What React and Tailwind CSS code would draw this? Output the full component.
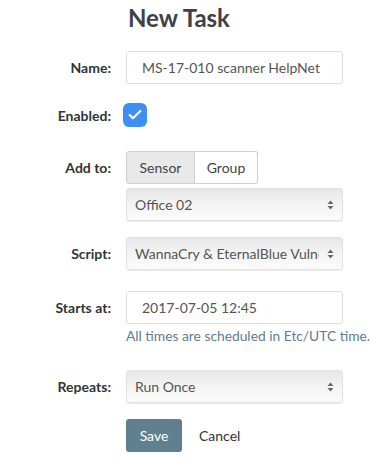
import { Check } from 'lucide-react';

const font = { fontFamily: 'Lato, "Open Sans", sans-serif' };

const Arrows = () => (
  <svg width="7" height="12" viewBox="0 0 7 12" className="shrink-0">
    <path d="M3.5 1.5 L6.5 5 L0.5 5 Z" fill="#666" />
    <path d="M3.5 10.5 L6.5 7 L0.5 7 Z" fill="#666" />
  </svg>
);

const Select = ({ value }) => (
  <div className="w-[217px] h-[33px] flex items-center justify-between pl-[8px] pr-[8px] rounded-[3px] border border-[#e2e2e2] bg-linear-to-b from-[#e6e6e6] via-[#f4f4f4] to-[#fbfbfb] shadow-[0_1px_1px_rgba(0,0,0,0.08)]">
    <span className="text-[14px] text-[#555] whitespace-nowrap overflow-hidden mr-2">{value}</span>
    <Arrows />
  </div>
);

const Row = ({ label, children, className = '' }) => (
  <div className={`flex items-center ${className}`}>
    <div className="w-[111px] text-right text-[14px] font-bold text-[#2f3438] shrink-0">{label}</div>
    <div className="ml-[15px]">{children}</div>
  </div>
);

const App = () => (
  <div className="w-[390px] h-[472px] bg-white text-[#333]" style={font}>
    <h1 className="pl-[128px] pt-[4px] text-[24px] font-bold text-[#3c4247] leading-[28px]">New Task</h1>

    <Row label="Name:" className="mt-[19px]">
      <div className="w-[217px] h-[33px] flex items-center px-[15px] border border-[#dedede] rounded-[3px] text-[14px] text-[#555]">
        MS-17-010 scanner HelpNet
      </div>
    </Row>

    <Row label="Enabled:" className="mt-[19px]">
      <div className="-ml-[3px] w-[24px] h-[24px] rounded-[6px] bg-[#3d8ef5] flex items-center justify-center">
        <Check className="w-[16px] h-[16px] text-white" strokeWidth={3.2} />
      </div>
    </Row>

    <Row label="Add to:" className="mt-[24px]">
      <div className="flex h-[33px] text-[14px] text-[#444]">
        <div className="w-[69px] flex items-center justify-center bg-[#e9e9e9] border border-[#cfcfcf] rounded-l-[3px]">Sensor</div>
        <div className="w-[63px] flex items-center justify-center bg-white border border-l-0 border-[#cfcfcf] rounded-r-[3px]">Group</div>
      </div>
    </Row>

    <Row label="" className="mt-[4px]">
      <Select value="Office 02" />
    </Row>

    <Row label="Script:" className="mt-[16px]">
      <Select value="WannaCry & EternalBlue Vulnerability" />
    </Row>

    <Row label="Starts at:" className="mt-[21px]">
      <div className="w-[217px] h-[33px] flex items-center px-[15px] border border-[#dedede] rounded-[3px] text-[14px] text-[#555]">
        2017-07-05 12:45
      </div>
    </Row>
    <div className="pl-[126px] mt-[3px] text-[13.8px] text-[#5f7d90] leading-[18px] whitespace-nowrap">All times are scheduled in Etc/UTC time.</div>

    <Row label="Repeats:" className="mt-[25px]">
      <Select value="Run Once" />
    </Row>

    <div className="flex items-center pl-[126px] mt-[16px]">
      <button className="w-[56px] h-[33px] rounded-[3px] bg-[#61808f] text-white text-[14px]">Save</button>
      <span className="ml-[17px] text-[14px] text-[#333]">Cancel</span>
    </div>
  </div>
);

export default App;
